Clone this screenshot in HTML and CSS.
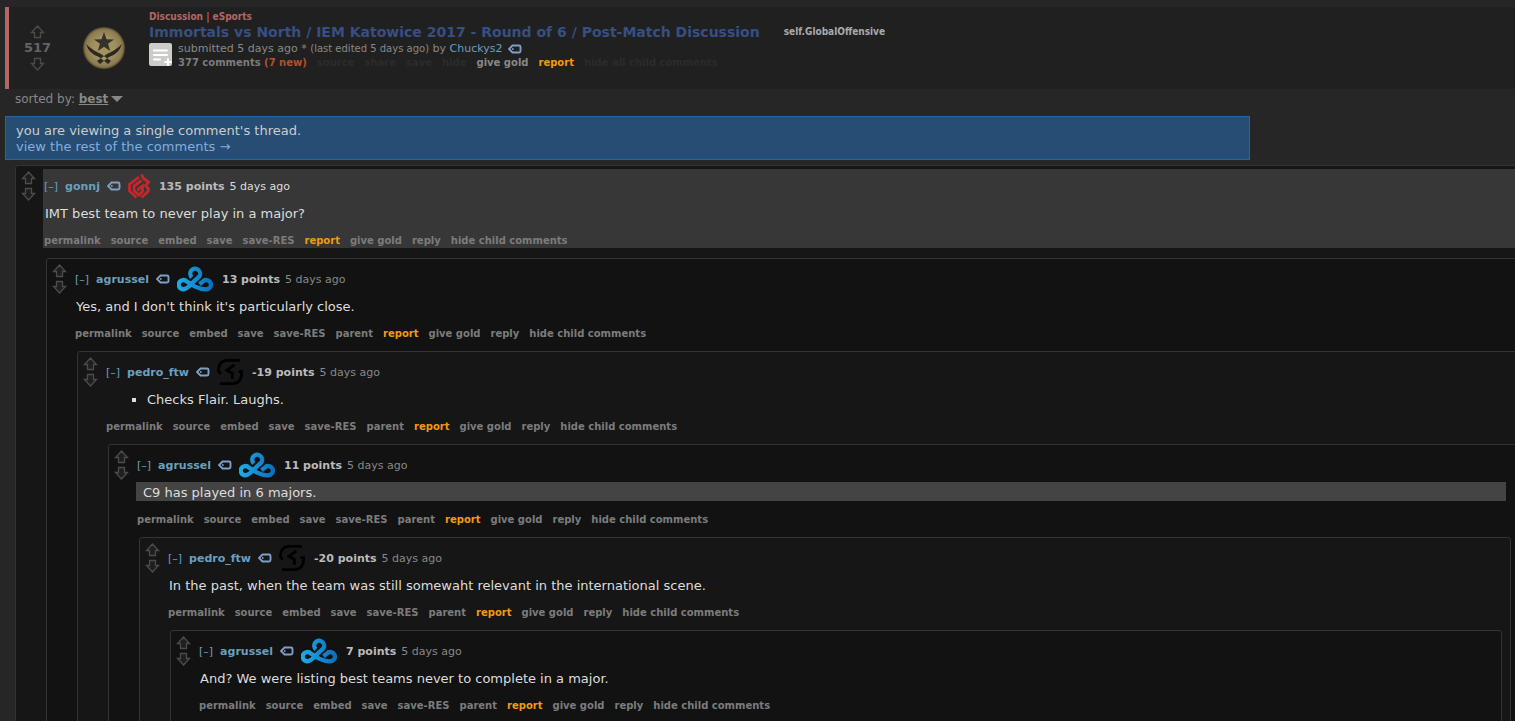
FILE: index.html
```html
<!DOCTYPE html>
<html lang="en">
<head>
    <meta charset="UTF-8">
    <title>Immortals vs North / IEM Katowice 2017</title>
    <link rel="stylesheet" href="styles.css">
</head>
<body>

<!-- shared icons -->
<svg class="sprite" aria-hidden="true">
    <linearGradient id="c9-blue" x1="0" x2="1" y1="0" y2="0">
        <stop offset="0" stop-color="#1fa8e6"/>
        <stop offset="1" stop-color="#0a72bd"/>
    </linearGradient>
    <symbol id="up" viewBox="0 0 15 14">
        <path d="M7.5 1 L13.5 7.5 H10.5 V12.5 H4.5 V7.5 H1.5 Z" fill="#1f1f1f" stroke="#4c4c4c" stroke-width="1.3"/>
    </symbol>
    <symbol id="down" viewBox="0 0 15 14">
        <path d="M7.5 13 L13.5 6.5 H10.5 V1.5 H4.5 V6.5 H1.5 Z" fill="#1f1f1f" stroke="#4c4c4c" stroke-width="1.3"/>
    </symbol>
    <symbol id="tag" viewBox="0 0 14 10">
        <path d="M4.5 1.5 H11 Q12.5 1.5 12.5 3 V7 Q12.5 8.5 11 8.5 H4.5 L1 5 Z" fill="none" stroke="#7f9fc6" stroke-width="1.9"/>
        <circle cx="4.8" cy="5" r="0.9" fill="#7f9fc6"/>
    </symbol>
    <symbol id="c9" viewBox="0 0 109 76">
        <path d="M45 33 A15 15 0 1 1 67 31 L42 54 Q30 68 19 69 A14 14 0 1 1 30 46 L55 61 Q74 70 88 69 A14 14 0 1 0 78 46 L68 54" fill="none" stroke="url(#c9-blue)" stroke-width="13"/>
    </symbol>
    <symbol id="sk" viewBox="0 0 76 76">
        <path d="M67 4 H28 Q5 6 4 32 Q5 40 12 42 M9 72 H46 Q71 70 72 44 V37 H63 M51 17 L29 33 L45 42 V58" fill="none" stroke="#000" stroke-width="8"/>
    </symbol>
    <symbol id="imt" viewBox="0 0 22 25">
        <path d="M11 3.5 L1.5 11 V17.5 L8.5 24 M13.5 7 L6 12.5 V17 L11 21.5 L14.5 18 V12.5 L10.5 15.5 V17.5 M13.5 1 L15.5 5 L20.5 8.5 L17.5 12 L20.5 15.5 L20 18 L13.5 24" fill="none" stroke="#c9252c" stroke-width="2.8"/>
    </symbol>
</svg>

<header class="post">
    <div class="post-votes">
        <button class="vote" aria-label="upvote"><svg><use href="#up"/></svg></button>
        <span class="score">517</span>
        <button class="vote" aria-label="downvote"><svg><use href="#down"/></svg></button>
    </div>
    <svg class="medal" viewBox="0 0 44 44">
        <defs>
            <radialGradient id="gold">
                <stop offset="0.5" stop-color="#a3925f"/>
                <stop offset="0.88" stop-color="#8b7b50"/>
                <stop offset="1" stop-color="#4d452e"/>
            </radialGradient>
        </defs>
        <circle cx="22" cy="22" r="21" fill="url(#gold)"/>
        <path d="M22 6 L24.5 13.2 L32 13.4 L26 17.8 L28.2 25 L22 20.8 L15.8 25 L18 17.8 L12 13.4 L19.5 13.2 Z" fill="#35322a"/>
        <path d="M4 18 Q10 24 19 28 L29 35 L26 38 L17 31 Q7 28 4 18 Z M40 18 Q34 24 25 28 L15 35 L18 38 L27 31 Q37 28 40 18 Z" fill="#2d2821"/>
    </svg>
    <div class="post-info">
        <div class="post-flair">Discussion | eSports</div>
        <div class="title-row">
            <a class="title" href="#">Immortals vs North / IEM Katowice 2017 - Round of 6 / Post-Match Discussion</a>
            <a class="domain" href="#">self.GlobalOffensive</a>
        </div>
        <div class="post-meta">
            <svg class="selftext" viewBox="0 0 23 23">
                <rect width="23" height="23" rx="2" fill="#ccccc8"/>
                <path d="M5 7.5 H18 M5 12 H18 M5 16.5 H11 M16 19 H22 M19 16 V22" stroke="#fff" stroke-width="2" stroke-linecap="round"/>
            </svg>
            <div>
                <div class="submitted">submitted 5 days ago * <small>(last edited 5 days ago)</small> by <a href="#">Chuckys2</a> <svg class="tag"><use href="#tag"/></svg></div>
                <nav class="buttons post-buttons">
                    <a href="#">377 comments <span class="new">(7 new)</span></a>
                    <a class="faded" href="#">source</a>
                    <a class="faded" href="#">share</a>
                    <a class="faded" href="#">save</a>
                    <a class="faded" href="#">hide</a>
                    <a class="gold" href="#">give gold</a>
                    <a class="report" href="#">report</a>
                    <a class="faded" href="#">hide all child comments</a>
                </nav>
            </div>
        </div>
    </div>
</header>

<div class="sort">sorted by: <button>best</button></div>

<div class="infobar">
    <div>you are viewing a single comment's thread.</div>
    <a href="#">view the rest of the comments →</a>
</div>

<main class="thread">
    <article class="comment">
        <div class="votes">
            <button class="vote" aria-label="upvote"><svg><use href="#up"/></svg></button>
            <button class="vote" aria-label="downvote"><svg><use href="#down"/></svg></button>
        </div>
        <div class="entry selected">
            <div class="tagline"><a class="fold" href="#">[–]</a><a class="author" href="#">gonnj</a><svg class="tag"><use href="#tag"/></svg><svg class="team imt"><use href="#imt"/></svg><b>135 points</b><time>5 days ago</time></div>
            <p class="text">IMT best team to never play in a major?</p>
            <nav class="buttons">
                <a href="#">permalink</a><a href="#">source</a><a href="#">embed</a><a href="#">save</a><a href="#">save-RES</a><a class="report" href="#">report</a><a href="#">give gold</a><a href="#">reply</a><a href="#">hide child comments</a>
            </nav>
        </div>

        <article class="comment even">
            <div class="votes">
                <button class="vote" aria-label="upvote"><svg><use href="#up"/></svg></button>
                <button class="vote" aria-label="downvote"><svg><use href="#down"/></svg></button>
            </div>
            <div class="entry">
                <div class="tagline"><a class="fold" href="#">[–]</a><a class="author" href="#">agrussel</a><svg class="tag"><use href="#tag"/></svg><svg class="team c9"><use href="#c9"/></svg><b>13 points</b><time>5 days ago</time></div>
                <p class="text">Yes, and I don't think it's particularly close.</p>
                <nav class="buttons">
                    <a href="#">permalink</a><a href="#">source</a><a href="#">embed</a><a href="#">save</a><a href="#">save-RES</a><a href="#">parent</a><a class="report" href="#">report</a><a href="#">give gold</a><a href="#">reply</a><a href="#">hide child comments</a>
                </nav>
            </div>

            <article class="comment">
                <div class="votes">
                    <button class="vote" aria-label="upvote"><svg><use href="#up"/></svg></button>
                    <button class="vote" aria-label="downvote"><svg><use href="#down"/></svg></button>
                </div>
                <div class="entry">
                    <div class="tagline"><a class="fold" href="#">[–]</a><a class="author" href="#">pedro_ftw</a><svg class="tag"><use href="#tag"/></svg><svg class="team sk"><use href="#sk"/></svg><b>-19 points</b><time>5 days ago</time></div>
                    <ul class="text">
                        <li>Checks Flair. Laughs.</li>
                    </ul>
                    <nav class="buttons">
                        <a href="#">permalink</a><a href="#">source</a><a href="#">embed</a><a href="#">save</a><a href="#">save-RES</a><a href="#">parent</a><a class="report" href="#">report</a><a href="#">give gold</a><a href="#">reply</a><a href="#">hide child comments</a>
                    </nav>
                </div>

                <article class="comment even">
                    <div class="votes">
                        <button class="vote" aria-label="upvote"><svg><use href="#up"/></svg></button>
                        <button class="vote" aria-label="downvote"><svg><use href="#down"/></svg></button>
                    </div>
                    <div class="entry">
                        <div class="tagline"><a class="fold" href="#">[–]</a><a class="author" href="#">agrussel</a><svg class="tag"><use href="#tag"/></svg><svg class="team c9"><use href="#c9"/></svg><b>11 points</b><time>5 days ago</time></div>
                        <blockquote class="text">C9 has played in 6 majors.</blockquote>
                        <nav class="buttons">
                            <a href="#">permalink</a><a href="#">source</a><a href="#">embed</a><a href="#">save</a><a href="#">save-RES</a><a href="#">parent</a><a class="report" href="#">report</a><a href="#">give gold</a><a href="#">reply</a><a href="#">hide child comments</a>
                        </nav>
                    </div>

                    <article class="comment">
                        <div class="votes">
                            <button class="vote" aria-label="upvote"><svg><use href="#up"/></svg></button>
                            <button class="vote" aria-label="downvote"><svg><use href="#down"/></svg></button>
                        </div>
                        <div class="entry">
                            <div class="tagline"><a class="fold" href="#">[–]</a><a class="author" href="#">pedro_ftw</a><svg class="tag"><use href="#tag"/></svg><svg class="team sk"><use href="#sk"/></svg><b>-20 points</b><time>5 days ago</time></div>
                            <p class="text">In the past, when the team was still somewaht relevant in the international scene.</p>
                            <nav class="buttons">
                                <a href="#">permalink</a><a href="#">source</a><a href="#">embed</a><a href="#">save</a><a href="#">save-RES</a><a href="#">parent</a><a class="report" href="#">report</a><a href="#">give gold</a><a href="#">reply</a><a href="#">hide child comments</a>
                            </nav>
                        </div>

                        <article class="comment even">
                            <div class="votes">
                                <button class="vote" aria-label="upvote"><svg><use href="#up"/></svg></button>
                                <button class="vote" aria-label="downvote"><svg><use href="#down"/></svg></button>
                            </div>
                            <div class="entry">
                                <div class="tagline"><a class="fold" href="#">[–]</a><a class="author" href="#">agrussel</a><svg class="tag"><use href="#tag"/></svg><svg class="team c9"><use href="#c9"/></svg><b>7 points</b><time>5 days ago</time></div>
                                <p class="text">And? We were listing best teams never to complete in a major.</p>
                                <nav class="buttons">
                                    <a href="#">permalink</a><a href="#">source</a><a href="#">embed</a><a href="#">save</a><a href="#">save-RES</a><a href="#">parent</a><a class="report" href="#">report</a><a href="#">give gold</a><a href="#">reply</a><a href="#">hide child comments</a>
                                </nav>
                            </div>
                        </article>
                    </article>
                </article>
            </article>
        </article>
    </article>
</main>

</body>
</html>
```
FILE: styles.css
```css
body {
    margin: 0;
    padding: 7px 0 0 5px;
    background-color: #262626;
    color: #888;
    font-family: Verdana, "DejaVu Sans", sans-serif;
    font-size: 11px;
    overflow-x: hidden;
}

a {
    color: inherit;
    text-decoration: none;
}

button {
    padding: 0;
    border: none;
    background: none;
    color: inherit;
    font: inherit;
    cursor: pointer;
}

svg {
    flex: none;
}

.sprite {
    position: absolute;
    width: 0;
    height: 0;
}

/* post header */

.post {
    display: flex;
    height: 82px;
    border-left: 4px solid #b36666;
    background-color: #202020;
}

.post-votes {
    display: flex;
    flex-direction: column;
    align-items: center;
    width: 57px;
    padding-top: 18px;
}

.score {
    color: #646464;
    font-size: 13px;
    font-weight: bold;
    line-height: 18px;
}

.vote {
    display: block;
    height: 14px;
}

.vote svg {
    display: block;
    width: 15px;
    height: 14px;
}

.medal {
    width: 44px;
    height: 44px;
    margin: 19px 23px 0 16px;
}

.post-info {
    padding-top: 2px;
    white-space: nowrap;
}

.post-flair {
    color: #b36666;
    font-family: Tahoma, "DejaVu Sans Condensed", sans-serif;
    font-size: 10px;
    font-weight: bold;
    line-height: 15px;
}

.title-row {
    display: flex;
    align-items: center;
    gap: 24px;
    line-height: 16px;
}

.title {
    color: #374f82;
    font-size: 14px;
    font-weight: bold;
}

.domain {
    color: #aaa;
    font-family: Tahoma, "DejaVu Sans Condensed", sans-serif;
    font-size: 10px;
    font-weight: bold;
}

.post-meta {
    display: flex;
    gap: 6px;
    padding-top: 2px;
}

.selftext {
    width: 23px;
    height: 23px;
    margin-top: 1px;
}

.submitted {
    line-height: 14px;
}

.submitted small {
    font-size: 10px;
}

.submitted a {
    color: #6a9fbf;
}

.submitted .tag {
    margin-left: 2px;
}

.tag {
    width: 14px;
    height: 10px;
    vertical-align: middle;
}

.buttons {
    display: flex;
    gap: 10px;
    padding-top: 2px;
    color: #7c7c7c;
    font-size: 10px;
    font-weight: bold;
    line-height: 14px;
}

.post-buttons {
    padding-top: 0;
}

.buttons .new {
    color: #b3502d;
}

.buttons .faded {
    color: #2b2b2b;
}

.buttons .gold {
    color: #888;
}

.buttons .report {
    color: #f09a12;
}

/* sort menu and notice */

.sort {
    padding: 2px 0 0 10px;
    font-size: 12px;
    line-height: 17px;
}

.sort button {
    font-weight: bold;
    text-decoration: underline;
}

.sort button::after {
    content: "";
    display: inline-block;
    margin-left: 3px;
    border: 6px solid transparent;
    border-top-color: #888;
    border-bottom: none;
    vertical-align: 1px;
}

.infobar {
    margin: 8px 265px 5px 0;
    padding: 6px 10px 4px;
    border: 1px solid #2b64a3;
    background-color: #264d73;
    color: #ccc;
    font-size: 13px;
    line-height: 16px;
}

.infobar a {
    color: #83aede;
}

/* comments */

.thread {
    margin-right: -32px;
    padding-left: 10px;
}

.comment {
    display: grid;
    grid-template-columns: 27px 1fr;
    padding: 3px 0 10px;
    border: 1px solid #333;
    border-radius: 3px;
    background-color: #161616;
}

.comment.even {
    background-color: #121212;
}

.comment .comment {
    grid-column: 1 / -1;
    margin: 10px 8px 0 30px;
}

.votes {
    display: flex;
    flex-direction: column;
    align-items: center;
    gap: 2px;
    padding: 2px 2px 0 0;
}

.selected {
    background-color: #373737;
}

.tagline {
    display: flex;
    align-items: center;
    height: 34px;
    padding-left: 1px;
}

.fold {
    margin-right: 7px;
    color: #6a9fbf;
}

.author {
    margin-right: 7px;
    color: #6a9fbf;
    font-weight: bold;
}

.team {
    height: 26px;
    margin: 0 9px 0 7px;
}

.imt {
    width: 22px;
}

.c9 {
    width: 36px;
}

.sk {
    width: 26px;
}

.tagline b {
    margin-right: 5px;
    color: #bbb;
}

.selected time {
    color: #ddd;
}

.text {
    margin: 0 0 10px;
    padding: 2px 0 0 2px;
    color: #ddd;
    font-size: 13px;
    line-height: 17px;
}

ul.text {
    padding-left: 42px;
    list-style: square;
}

blockquote.text {
    margin-right: 13px;
    padding-left: 7px;
    background-color: #444;
}

.comment .buttons {
    padding-left: 1px;
}
```
